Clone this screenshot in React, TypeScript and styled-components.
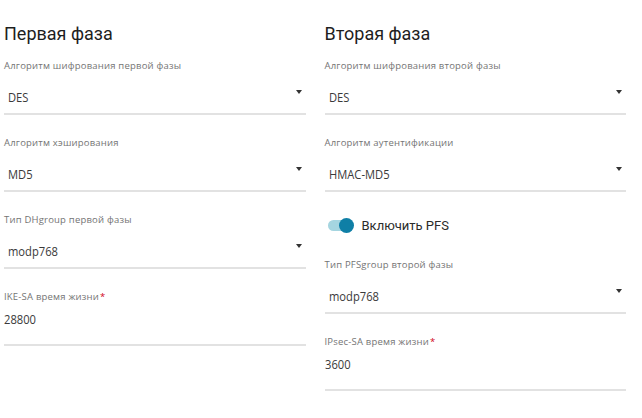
import styled, { createGlobalStyle } from 'styled-components';

const GlobalStyle = createGlobalStyle`
    html, body {
        margin: 0;
        padding: 0;
        background: #ffffff;
    }
`;

const Page = styled.div`
    display: grid;
    grid-template-columns: 1fr 1fr;
    column-gap: 19px;
    padding: 22px 16px 0 4px;
    font-family: "Open Sans", sans-serif;
`;

const Column = styled.div`
    display: flex;
    flex-direction: column;
`;

const Title = styled.h2`
    margin: 0 0 14px;
    font-family: Roboto, sans-serif;
    font-weight: 400;
    font-size: 18px;
    line-height: 24px;
    color: #1e1e1e;
`;

const Field = styled.div`
    display: flex;
    flex-direction: column;
    margin-bottom: 22px;
`;

const Label = styled.label`
    font-size: 9.5px;
    line-height: 12px;
    letter-spacing: 0.2px;
    color: #747474;
    white-space: nowrap;
`;

const Required = styled.span`
    color: #d0021b;
    margin-left: 1px;
`;

const SelectBox = styled.div`
    display: flex;
    align-items: center;
    justify-content: space-between;
    height: 33px;
    margin-top: 8px;
    padding: 0 4px;
    border-bottom: 2px solid #e2e2e2;
`;

const Value = styled.span`
    display: inline-block;
    font-size: 13px;
    line-height: 18px;
    color: #3a3a3a;
    transform: scaleX(0.86);
    transform-origin: left center;
    white-space: nowrap;
`;

const Arrow = styled.span`
    align-self: flex-start;
    margin-top: 10px;
    width: 0;
    height: 0;
    border-left: 3px solid transparent;
    border-right: 3px solid transparent;
    border-top: 4px solid #333;
`;

const InputBox = styled.div`
    margin-top: 4px;
    padding-bottom: 15px;
    border-bottom: 2px solid #e2e2e2;
`;

const ToggleRow = styled.div`
    display: flex;
    align-items: center;
    gap: 8px;
    height: 23px;
    margin-bottom: 22px;
    padding-left: 3px;
`;

const Track = styled.span<{ $on: boolean }>`
    position: relative;
    display: inline-block;
    width: 22px;
    height: 11px;
    border-radius: 6px;
    margin-right: 4px;
    background: ${p => (p.$on ? '#a5d5e0' : '#cfcfcf')};
`;

const Knob = styled.span<{ $on: boolean }>`
    position: absolute;
    top: -2px;
    left: ${p => (p.$on ? '11px' : '-2px')};
    width: 15px;
    height: 15px;
    border-radius: 50%;
    background: ${p => (p.$on ? '#0f7fa6' : '#f5f5f5')};
`;

const ToggleText = styled.span`
    font-family: Roboto, sans-serif;
    font-size: 13px;
    color: #2b2b2b;
`;

interface FieldProps {
    label: string;
    value: string;
}

const SelectField: React.FC<FieldProps> = ({ label, value }) => (
    <Field>
        <Label>{label}</Label>
        <SelectBox>
            <Value>{value}</Value>
            <Arrow />
        </SelectBox>
    </Field>
);

const TextField: React.FC<FieldProps> = ({ label, value }) => (
    <Field>
        <Label>
            {label}
            <Required>*</Required>
        </Label>
        <InputBox>
            <Value>{value}</Value>
        </InputBox>
    </Field>
);

export default function App() {
    return (
        <>
            <GlobalStyle />
            <Page>
                <Column>
                    <Title>Первая фаза</Title>
                    <SelectField label="Алгоритм шифрования первой фазы" value="DES" />
                    <SelectField label="Алгоритм хэширования" value="MD5" />
                    <SelectField label="Тип DHgroup первой фазы" value="modp768" />
                    <TextField label="IKE-SA время жизни" value="28800" />
                </Column>
                <Column>
                    <Title>Вторая фаза</Title>
                    <SelectField label="Алгоритм шифрования второй фазы" value="DES" />
                    <SelectField label="Алгоритм аутентификации" value="HMAC-MD5" />
                    <ToggleRow>
                        <Track $on>
                            <Knob $on />
                        </Track>
                        <ToggleText>Включить PFS</ToggleText>
                    </ToggleRow>
                    <SelectField label="Тип PFSgroup второй фазы" value="modp768" />
                    <TextField label="IPsec-SA время жизни" value="3600" />
                </Column>
            </Page>
        </>
    );
}
